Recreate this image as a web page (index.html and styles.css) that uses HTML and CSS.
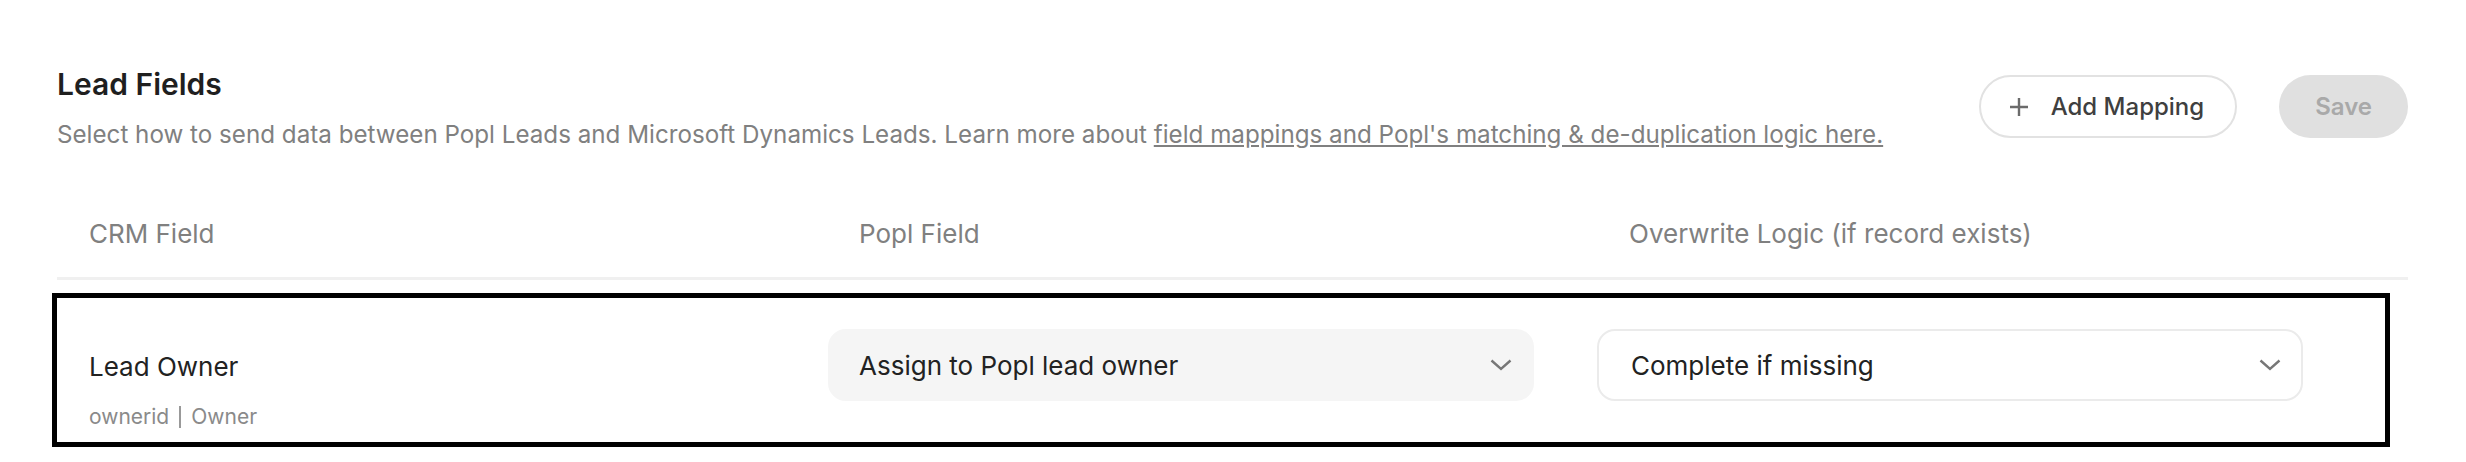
FILE: index.html
```html
<!DOCTYPE html>
<html>

<head>
    <title>Lead Fields</title>
    <link rel="stylesheet" href="styles.css">
</head>

<body>
    <div class="page">
        <div class="section-head">
            <div class="section-text">
                <h2>Lead Fields</h2>
                <p class="section-desc">Select how to send data between Popl Leads and Microsoft Dynamics Leads. Learn more about <a href="#">field mappings and Popl's matching &amp; de-duplication logic here.</a></p>
            </div>
            <div class="actions">
                <button class="btn-outline">
                    <svg width="20" height="20" viewBox="0 0 20 20"><path d="M10 1v18M1 10h18" stroke="#6b6b6b" stroke-width="2.4" fill="none"/></svg>
                    Add Mapping
                </button>
                <button class="btn-save" disabled>Save</button>
            </div>
        </div>

        <div class="table-head">
            <div class="head-cell">CRM Field</div>
            <div class="head-cell">Popl Field</div>
            <div class="head-cell">Overwrite Logic (if record exists)</div>
        </div>

        <div class="table-row">
            <div class="crm-cell">
                <div class="field-name">Lead Owner</div>
                <div class="field-meta">ownerid<span class="sep"></span>Owner</div>
            </div>
            <div class="select-cell">
                <div class="select filled">
                    <span>Assign to Popl lead owner</span>
                    <svg width="22" height="12" viewBox="0 0 22 12"><polyline points="1.5,1.5 11,10 20.5,1.5" stroke="#777" stroke-width="2.4" fill="none"/></svg>
                </div>
            </div>
            <div class="select-cell">
                <div class="select">
                    <span>Complete if missing</span>
                    <svg width="22" height="12" viewBox="0 0 22 12"><polyline points="1.5,1.5 11,10 20.5,1.5" stroke="#777" stroke-width="2.4" fill="none"/></svg>
                </div>
            </div>
        </div>
    </div>
</body>

</html>
```

FILE: styles.css
```css
body {
    margin: 0;
    font-family: Inter, "Noto Sans", sans-serif;
    background-color: #fff;
    color: #222;
}

.page {
    padding: 66px 58px 0 57px;
}

.section-head {
    display: flex;
    justify-content: space-between;
    align-items: flex-start;
}

h2 {
    margin: 0;
    font-size: 30px;
    font-weight: 600;
    line-height: 36px;
    color: #1f1f1f;
}

.section-desc {
    margin: 15px 0 0;
    font-size: 24.2px;
    line-height: 36px;
    color: #808080;
}

.section-desc a {
    color: #808080;
    text-decoration: underline;
}

.actions {
    display: flex;
    gap: 42px;
    margin-top: 9px;
}

.btn-outline,
.btn-save {
    height: 63px;
    border-radius: 999px;
    font-family: inherit;
    font-size: 24px;
    display: flex;
    align-items: center;
}

.btn-outline {
    padding: 0 31px 0 28px;
    gap: 22px;
    background: #fff;
    border: 2px solid #e2e2e2;
    color: #3f3f3f;
    font-weight: 500;
}

.btn-save {
    padding: 0 36px;
    background: #e0e0e0;
    border: none;
    color: #a9a9a9;
    font-weight: 600;
}

.table-head,
.table-row {
    display: grid;
    grid-template-columns: 770px 770px 1fr;
}

.table-head {
    margin-top: 62px;
    border-bottom: 3px solid #f0f0f0;
}

.head-cell {
    padding: 0 32px 24px;
    font-size: 26px;
    line-height: 38px;
    color: #808080;
}

.table-row {
    margin: 13px 18px 0 -5px;
    border: 5px solid #000;
    padding: 31px 0 11px;
}

.crm-cell {
    padding: 20px 32px 0;
}

.field-name {
    font-size: 26px;
    line-height: 36px;
    color: #222;
}

.field-meta {
    margin-top: 18px;
    font-size: 21px;
    line-height: 28px;
    color: #8a8a8a;
    display: flex;
    align-items: center;
}

.sep {
    display: inline-block;
    width: 2px;
    height: 22px;
    background: #999;
    margin: 0 10px;
}

.select {
    width: 706px;
    height: 72px;
    box-sizing: border-box;
    border-radius: 18px;
    border: 2px solid #ebebeb;
    background: #fff;
    padding: 0 20px 0 32px;
    display: flex;
    justify-content: space-between;
    align-items: center;
    font-size: 26px;
    color: #222;
}

.select.filled {
    background: #f5f5f5;
    border-color: #f5f5f5;
    margin-left: 1px;
    padding-left: 29px;
}
```
